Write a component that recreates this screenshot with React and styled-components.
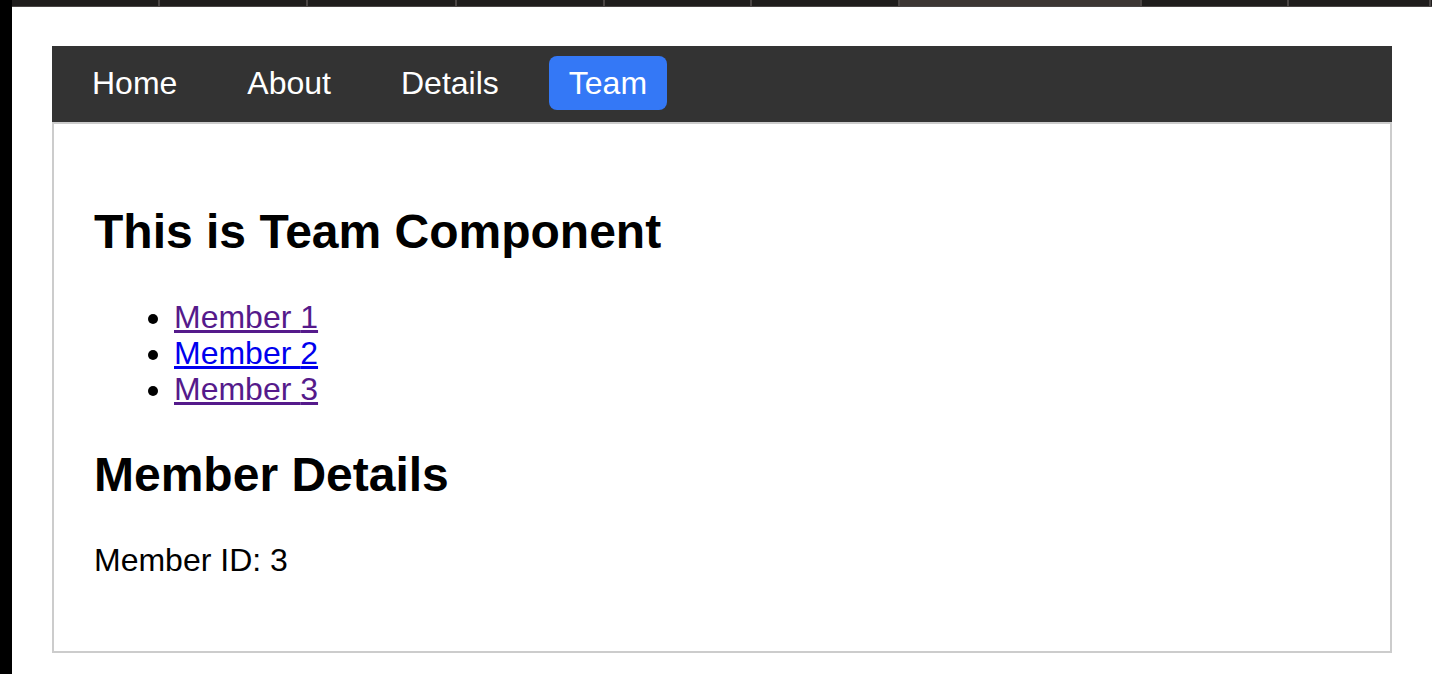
import styled, { createGlobalStyle } from "styled-components";

const GlobalStyle = createGlobalStyle`
  html, body {
    margin: 0;
    padding: 0;
    background: #fff;
  }
  body {
    font-family: "Liberation Sans", Arial, sans-serif;
  }
`;

//============================== Browser chrome ==============================//

const Screen = styled.div`
  display: flex;
  width: 1432px;
  height: 674px;
  overflow: hidden;
`;

const EdgeStrip = styled.div`
  width: 12px;
  flex-shrink: 0;
  background: #000;
`;

const Window = styled.div`
  flex: 1;
  display: flex;
  flex-direction: column;
  min-width: 0;
`;

const TabBar = styled.div`
  display: flex;
  height: 6px;
  background: #1f1d1c;
  border-bottom: 1px solid #4a4645;
`;

const Tab = styled.div`
  box-sizing: border-box;
  width: ${({ $w }) => $w}px;
  flex-shrink: 0;
  background: ${({ $active }) => ($active ? "#3c3633" : "#1f1d1c")};
  border-right: 2px solid #4a4544;
`;

//============================== Page ==============================//

const Page = styled.div`
  flex: 1;
  padding: 39px 40px 0;
  background: #fff;
`;

const Nav = styled.nav`
  display: flex;
  align-items: center;
  gap: 30px;
  height: 76px;
  box-sizing: border-box;
  padding: 10px 20px 12px;
  background: #333;
`;

const NavLink = styled.a`
  display: block;
  padding: 10px 20px;
  font-size: 32px;
  line-height: 34px;
  color: #fff;
  text-decoration: none;
  border-radius: 8px;
  background: ${({ $active }) => ($active ? "#3478f6" : "transparent")};
`;

const Content = styled.div`
  border: 2px solid #ccc;
  padding: 40px;
  font-size: 32px;
  color: #000;
`;

const Heading = styled.h2`
  font-size: 48px;
  font-weight: bold;
  margin: 40px 0;
`;

const MemberList = styled.ul`
  margin: 32px 0;
  padding-left: 80px;
  list-style: disc;
  line-height: 36px;
`;

const MemberLink = styled.a`
  color: ${({ $visited }) => ($visited ? "#551a8b" : "#0000ee")};
  text-decoration: underline;
`;

const Text = styled.p`
  margin: 32px 0;
`;

const tabs = [148, 148, 149, 148, 147, 148, 242, 147, 142];
const links = ["Home", "About", "Details", "Team"];
const members = [
  { id: 1, visited: true },
  { id: 2, visited: false },
  { id: 3, visited: true },
];

export default function App() {
  return (
    <>
      <GlobalStyle />
      <Screen>
        <EdgeStrip />
        <Window>
          <TabBar>
            {tabs.map((w, i) => (
              <Tab key={i} $w={w} $active={i === 6} />
            ))}
          </TabBar>
          <Page>
            <Nav>
              {links.map((l) => (
                <NavLink key={l} href="#" $active={l === "Team"}>
                  {l}
                </NavLink>
              ))}
            </Nav>
            <Content>
              <Heading>This is Team Component</Heading>
              <MemberList>
                {members.map((m) => (
                  <li key={m.id}>
                    <MemberLink href="#" $visited={m.visited}>
                      Member {m.id}
                    </MemberLink>
                  </li>
                ))}
              </MemberList>
              <Heading>Member Details</Heading>
              <Text>Member ID: 3</Text>
            </Content>
          </Page>
        </Window>
      </Screen>
    </>
  );
}
